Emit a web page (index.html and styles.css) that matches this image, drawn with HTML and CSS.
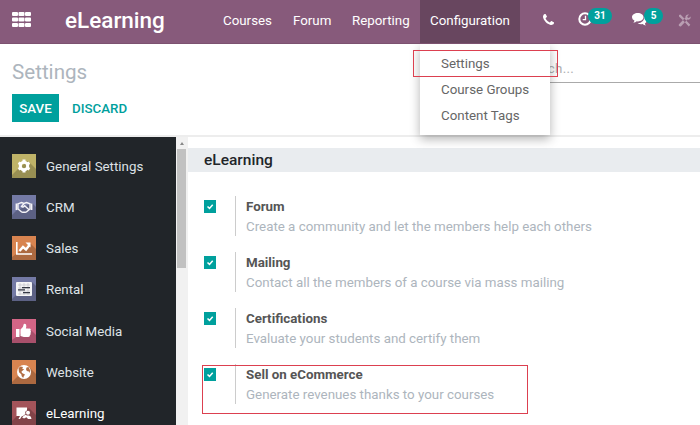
FILE: index.html
```html
<!DOCTYPE html>
<html lang="en">
<head>
<meta charset="utf-8">
<title>eLearning Settings</title>
<link rel="stylesheet" href="styles.css">
</head>
<body>
<nav class="navbar">
  <svg class="apps" viewBox="0 0 19 15"><path d="M1 0h4q1 0 1 1v2q0 1-1 1H1Q0 4 0 3V1Q0 0 1 0zM7.500 0h4q1 0 1 1v2q0 1-1 1h-4q-1 0-1-1V1q0-1 1-1zM14 0h4q1 0 1 1v2q0 1-1 1h-4q-1 0-1-1V1q0-1 1-1zM1 5.500h4q1 0 1 1v2q0 1-1 1H1q-1 0-1-1v-2q0-1 1-1zM7.500 5.500h4q1 0 1 1v2q0 1-1 1h-4q-1 0-1-1v-2q0-1 1-1zM14 5.500h4q1 0 1 1v2q0 1-1 1h-4q-1 0-1-1v-2q0-1 1-1zM1 11h4q1 0 1 1v2q0 1-1 1H1q-1 0-1-1v-2q0-1 1-1zM7.500 11h4q1 0 1 1v2q0 1-1 1h-4q-1 0-1-1v-2q0-1 1-1zM14 11h4q1 0 1 1v2q0 1-1 1h-4q-1 0-1-1v-2q0-1 1-1z"/></svg>
  <div class="brand">eLearning</div>
  <div class="menu">
    <span class="courses">Courses</span><span class="forum">Forum</span><span class="reporting">Reporting</span>
    <div class="active"><span>Configuration</span>
      <div class="dropdown"><div>Settings</div><div>Course Groups</div><div>Content Tags</div></div>
    </div>
  </div>
  <div class="systray">
    <svg class="phone" viewBox="0 128 1408 1408"><path d="M1408 1240q0 27-10 70.500t-21 68.500q-21 50-122 106-94 51-186 51-27 0-53-3.500t-57-12.500-47-14.500-55.500-20.500-49.500-18q-98-35-175-83-127-79-264-216t-216-264q-48-77-83-175-3-9-18-49.500t-20.500-55.500-14.500-47-12.500-57-3.500-53q0-92 51-186 56-101 106-122 25-11 68.500-21t70.500-10q14 0 21 3 18 6 53 76 11 19 30 54t35 63.500 31 53.500q3 4 17.500 25t21.500 35.500 7 28.500q0 20-28.500 50t-62 55-62 53-28.500 46q0 9 5 22.500t8.500 20.500 14 24 11.500 19q76 137 174 235t235 174q2 1 19 11.500t24 14 20.500 8.500 22.500 5q18 0 46-28.500t53-62 55-62 50-28.500q14 0 28.500 7t35.500 21.500 25 17.500q25 15 53.500 31t63.500 35 54 30q70 35 76 53 3 7 3 21z"/></svg>
    <div class="tray clock"><svg viewBox="0 0 14 14"><circle cx="7" cy="7" r="5.700" fill="none" stroke="#fff" stroke-width="2"/><path d="M7.500 3.700v4H4.700" fill="none" stroke="#fff" stroke-width="1.300"/></svg><b>31</b></div>
    <div class="tray chat"><svg viewBox="0 0 15 13"><path d="M5.800 0C9 0 11.500 1.900 11.500 4.200S9 8.400 5.800 8.400l-1-.1Q3.500 9.500 1.300 9.800q1-.9 1.100-2.200Q0 6.300 0 4.200C0 1.900 2.600 0 5.800 0zM12.500 3.500Q15 5 15 7.200q0 1.900-2.100 3.200.2 1.300 1.200 2.200-2.200-.2-3.500-1.500-2.900.4-5-.9 6.600-.1 6.900-6.700z"/></svg><b>5</b></div>
    <svg class="tools" viewBox="0 0 13 13"><path d="M1 1l1.500-.5L7 5.300l5.300 5.500-1.500 1.600L5.500 6.800 1 2.500zM12.600 2.500l-1.700 1.400L9.500 3.600l-.2-1.400L11 .6C9 0 7.200 1.500 7.500 3.600L1 10.200q-.7 1 .2 1.800t1.900.2l6.300-6.600c2 .5 3.700-1.100 3.200-3.100z"/></svg>
  </div>
</nav>
<header class="control">
  <div class="crumb"><h1>Settings</h1><div class="search">Search...</div></div>
  <div class="buttons"><button class="save">SAVE</button><button class="discard">DISCARD</button></div>
</header>
<main>
  <aside>
    <div class="app"><svg class="gold" viewBox="0 0 24 24"><path class="shade" d="M6 15L16 7l8 8v9H0v-3z"/><circle cx="12" cy="12" r="3.700" fill="none" stroke="#fff" stroke-width="3"/><path d="M12 5.600v2.800m0 7.200v2.800M6.500 8.800l2.400 1.400m6.200 3.600l2.400 1.400m-11 0l2.400-1.400m6.200-3.600l2.400-1.400" stroke="#fff" stroke-width="3"/></svg><span>General Settings</span></div>
    <div class="app"><svg class="blue" viewBox="0 0 24 24"><path class="shade" d="M4 16L20 8l4 4v12H0v-4z"/><path d="M4.500 8.500v6.500m15-6.500v6.500" stroke="#f4f3f7" stroke-width="1.800"/><path d="M6 8.800l3.500-1.300 2.500 1 2.500-1L18 8.800v5.200l-3.500 2.800q-2.500 1-5 0L6 14zM12 8.500l-2.500 3q1.500 1.300 3.200-.7l4.300 4" fill="none" stroke="#f4f3f7" stroke-width="1.400"/></svg><span>CRM</span></div>
    <div class="app"><svg class="orange" viewBox="0 0 24 24"><path class="shade" d="M4 18l15-10 5 5v11H0v-3z"/><path d="M4.800 6v12H20" fill="none" stroke="#fff" stroke-width="1.600"/><path d="M7.500 15l3.500-4 3 2.500L17.500 9" fill="none" stroke="#fff" stroke-width="2.400"/><path d="M13.500 6.500h5v5z" fill="#fff"/></svg><span>Sales</span></div>
    <div class="app"><svg class="blue" viewBox="0 0 24 24"><path class="shade" d="M4 18L20 5l4 4v15H0v-2z"/><rect x="4" y="5" width="16" height="14" rx="1" fill="#f5f5f6"/><path d="M6 8h12M6 11h12M6 14h12M6 17h12M8 6v12m4-12v12m4-12v12" stroke="#b9bac3" stroke-width=".6"/><path d="M10 10.600h8M6 12.800h7M11 15.600h7" stroke="#343844" stroke-width="1.300"/></svg><span>Rental</span></div>
    <div class="app"><svg class="pink" viewBox="0 0 24 24"><path class="shade" d="M4 18L17 9l7 7v8H0v-3z"/><path d="M4 10h3.500v8H4zM8.500 10.500q3-2 3.300-5.500 2.800-1 2.500 2.500l-.4 2H18q1.400.8.500 2.200 1 1.100 0 2.200.7 1.300-.5 2.100.1 2-1.700 2h-4.500l-3.300-1z" fill="#fff"/></svg><span>Social Media</span></div>
    <div class="app"><svg class="orange" viewBox="0 0 24 24"><path class="shade" d="M6 16l11-9 7 7v10H0v-2z"/><circle cx="12" cy="12" r="7" fill="#fff"/><path d="M6.500 8l2-1.500 2.500.6-.8 1.700 2 .4-2.700 2.300.5 1.500 3 1.400-1.300 2-.5 1.700-1.500-1.800-.4-2-2.300-2zM14.500 7.500l2-.5 1.500 3-.2 3-1-1.500-2-.6-.8-1.600z" fill="#b36f45"/></svg><span>Website</span></div>
    <div class="app current"><svg class="red" viewBox="0 0 24 24"><path class="shade" d="M5 15L17 7l7 7v10H0v-4z"/><path d="M4.500 6.500H15v3q-2.500.8-1.500 3.500l-2.500 2H4.500zM8 15h2l-2 3H6.500z" fill="#fff"/><circle cx="16" cy="11.700" r="2" fill="#fff"/><path d="M10 16.200l3.300-2.500 1.700.8h2q2.500.7 2.500 3.500H16l-1.500-1.800-2.500 1.200z" fill="#fff"/></svg><span>eLearning</span></div>
  </aside>
  <div class="scroll"><div class="arrow"></div><div class="thumb"></div></div>
  <section>
    <h2>eLearning</h2>
    <div class="list">
      <div class="option"><svg class="check" viewBox="0 0 12 12"><path d="M3.500 6l2 1.900 3.200-3.600"/></svg><div class="text"><h3>Forum</h3><p>Create a community and let the members help each others</p></div></div>
      <div class="option"><svg class="check" viewBox="0 0 12 12"><path d="M3.500 6l2 1.900 3.200-3.600"/></svg><div class="text"><h3>Mailing</h3><p>Contact all the members of a course via mass mailing</p></div></div>
      <div class="option"><svg class="check" viewBox="0 0 12 12"><path d="M3.500 6l2 1.900 3.200-3.600"/></svg><div class="text"><h3>Certifications</h3><p>Evaluate your students and certify them</p></div></div>
      <div class="option"><svg class="check" viewBox="0 0 12 12"><path d="M3.500 6l2 1.900 3.200-3.600"/></svg><div class="text"><h3>Sell on eCommerce</h3><p>Generate revenues thanks to your courses</p></div></div>
    </div>
  </section>
</main>
<div class="mark mark-menu"></div>
<div class="mark mark-option"></div>
</body>
</html>
```
FILE: styles.css
```css
* { box-sizing: border-box; }
body { margin: 0; width: 700px; height: 425px; overflow: hidden; background: #fff; font-family: Roboto, sans-serif; font-size: 13.33px; position: relative; }
h1, h2, h3, p { margin: 0; }
svg { display: block; flex: none; }
.navbar { height: 44px; background: #875a7b; border-bottom: 1px solid #7c5270; display: flex; color: #fff; }
.apps { width: 19px; height: 15px; margin: 12px 0 0 12px; fill: #fff; }
.brand { width: 142px; margin-left: 34px; font-size: 22.5px; font-weight: 500; line-height: 40px; white-space: nowrap; }
.menu { display: flex; line-height: 41px; margin-left: 16px; }
.courses { width: 70px; }
.forum { width: 59px; }
.reporting { width: 68px; }
.active { position: relative; width: 100px; height: 43px; background: #68465f; padding-left: 10px; }
.dropdown { position: absolute; z-index: 2; left: 0; top: 44px; width: 130px; height: 91px; background: #fff; color: #666; padding: 7px 0 0 21px; box-shadow: 0 4px 10px rgba(0,0,0,.3); line-height: 26px; white-space: nowrap; clip-path: inset(0 -20px -20px -20px); }
.systray { display: flex; padding-left: 23px; }
.phone { width: 11px; height: 11px; margin-top: 14px; fill: #fff; }
.tray { position: relative; }
.tray svg { fill: #fff; }
.clock { width: 14px; margin: 12px 0 0 24px; }
.clock svg { width: 14px; height: 14px; }
.chat { width: 15px; margin: 13px 0 0 40px; }
.chat svg { width: 15px; height: 13px; }
.tray b { position: absolute; height: 16px; border-radius: 8px; background: #00a09d; font-size: 10px; line-height: 16px; text-align: center; }
.clock b { width: 24px; left: 10px; top: -4px; }
.chat b { width: 19px; left: 12px; top: -5px; }
.tools { width: 13px; height: 13px; margin: 14px 0 0 31px; fill: #b99eb2; }
.control { height: 93px; border-bottom: 2px solid #ededed; padding: 15px 0 0 12px; }
.crumb { display: flex; height: 35px; }
.crumb h1 { color: #adb5bd; font-size: 20.6px; line-height: 26px; font-weight: 400; width: 499px; }
.search { flex: 1; height: 24px; border-bottom: 1px solid #aaa; color: #adb0b3; padding-left: 9px; line-height: 20px; letter-spacing: .3px; }
.buttons { display: flex; }
button { border: 0; padding: 0; height: 28px; font: 500 13.33px Roboto, sans-serif; }
.save { width: 47px; background: #00a09d; color: #fff; }
.discard { margin-left: 13px; color: #00a09d; background: none; }
main { display: flex; height: 288px; }
aside { width: 176px; background: #212529; padding: 17px 0 0 12px; overflow: hidden; }
.app { display: flex; height: 41.17px; color: #dee2e6; gap: 10px; line-height: 25px; }
.app svg { width: 24px; height: 24px; }
.current { color: #fff; }
.shade { fill: rgba(0,0,0,.2); }
.gold { background: #bfb368; }
.blue { background: #747aa5; }
.orange { background: #d88450; }
.pink { background: #d36586; }
.red { background: #a3545a; }
.scroll { width: 12px; padding-left: 1px; background: #f1f1f1; }
.arrow { height: 12px; padding: 5px 0 0 3px; }
.arrow::before { content: ""; display: block; width: 0; border: 2.5px solid transparent; border-top: 0; border-bottom: 3px solid #888; }
.thumb { width: 9px; height: 119px; background: #c1c1c1; }
section { flex: 1; padding-top: 11px; }
h2 { height: 24px; padding-left: 16px; background: #e9ecef; color: #212529; font-size: 15.5px; line-height: 25px; font-weight: 500; }
.list { padding: 24px 0 0 16px; }
.option { display: flex; height: 56px; }
.check { width: 12px; height: 13px; margin-top: 4px; background: #00a09d; }
.check path { fill: none; stroke: #fff; stroke-width: 1.500; }
.text { height: 40px; border-left: 1px solid #ccc; margin-left: 19px; padding-left: 10px; white-space: nowrap; }
h3 { color: #555; font-size: 13.33px; font-weight: 700; line-height: 21px; }
p { color: #adb5bd; line-height: 19px; }
.mark { position: absolute; z-index: 3; border: 1px solid #dc4050; }
.mark-menu { left: 413px; top: 50px; width: 145px; height: 27px; }
.mark-option { left: 202px; top: 365px; width: 326px; height: 49px; }
```
